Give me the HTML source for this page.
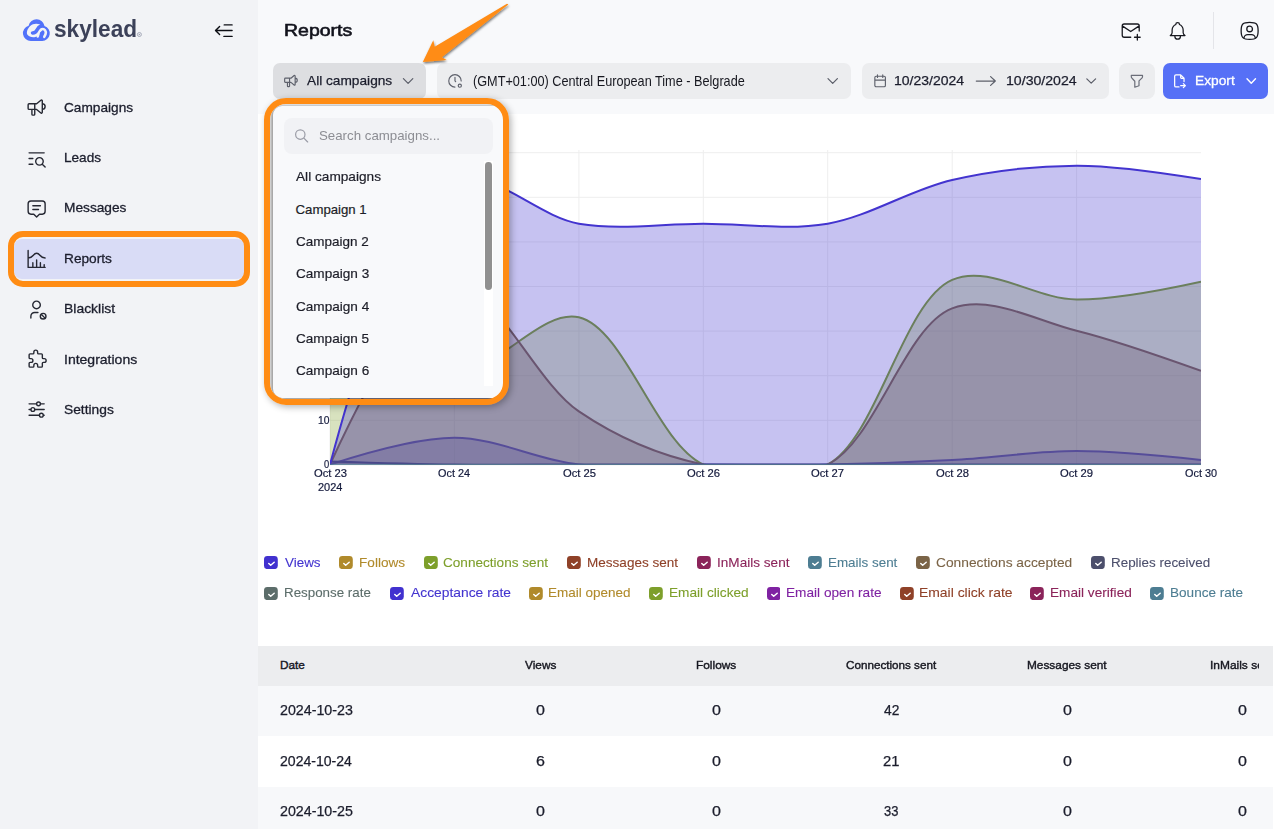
<!DOCTYPE html>
<html><head><meta charset="utf-8"><title>Reports</title>
<style>
*{box-sizing:border-box;margin:0;padding:0}
html,body{width:1274px;height:829px;overflow:hidden;background:#fff;font-family:"Liberation Sans",sans-serif;color:#1b1d2c}
.abs{position:absolute}
.t{position:absolute;white-space:nowrap;line-height:normal;transform-origin:0 0}
#side{position:absolute;left:0;top:0;width:258px;height:829px;background:#f2f3f6}
#main{position:absolute;left:258px;top:0;width:1016px;height:114px;background:#f8f9fb}
.fb{position:absolute;top:62.8px;height:35.8px;border-radius:7px;background:#ecedef}
.row{position:absolute;left:258px;width:1015px}
</style></head><body>
<div id="side"></div>
<div id="main"></div>
<div class="abs" style="left:13.6px;top:238.8px;width:231px;height:40.3px;border-radius:8px;background:#d9dcf6"></div>
<div class="abs" style="left:8px;top:231.1px;width:242px;height:55.9px;border:6px solid #ff8c14;border-radius:15px"></div>
<div class="abs" style="left:1213px;top:12px;width:1px;height:37px;background:#e4e5e9"></div>
<div class="fb" style="left:273.2px;width:152.8px;background:#dddee1"></div>
<div class="fb" style="left:437px;width:414px"></div>
<div class="fb" style="left:862.1px;width:247px"></div>
<div class="fb" style="left:1119px;width:36px;border-radius:8px"></div>
<div class="fb" style="left:1163px;width:105px;background:#5670f6;border-radius:7px"></div>
<!-- table -->
<div class="row" style="top:646.2px;height:39.5px;background:#ecedef"></div>
<div class="row" style="top:685.7px;height:50.4px;background:#f7f8fa"></div>
<div class="row" style="top:787px;height:42px;background:#f7f8fa"></div>
<svg class="abs" style="left:0;top:0" width="1274" height="829" viewBox="0 0 1274 829"><defs><clipPath id="pc"><rect x="330.0" y="150" width="871.0" height="314.8"/></clipPath></defs><line x1="330.0" x2="330.0" y1="150" y2="464.5" stroke="#eeeeee" stroke-width="1"/><line x1="454.4" x2="454.4" y1="150" y2="464.5" stroke="#eeeeee" stroke-width="1"/><line x1="578.9" x2="578.9" y1="150" y2="464.5" stroke="#eeeeee" stroke-width="1"/><line x1="703.3" x2="703.3" y1="150" y2="464.5" stroke="#eeeeee" stroke-width="1"/><line x1="827.7" x2="827.7" y1="150" y2="464.5" stroke="#eeeeee" stroke-width="1"/><line x1="952.2" x2="952.2" y1="150" y2="464.5" stroke="#eeeeee" stroke-width="1"/><line x1="1076.6" x2="1076.6" y1="150" y2="464.5" stroke="#eeeeee" stroke-width="1"/><line x1="330.0" x2="1201.0" y1="464.9" y2="464.9" stroke="#eeeeee" stroke-width="1"/><line x1="330.0" x2="1201.0" y1="420.3" y2="420.3" stroke="#eeeeee" stroke-width="1"/><line x1="330.0" x2="1201.0" y1="375.7" y2="375.7" stroke="#eeeeee" stroke-width="1"/><line x1="330.0" x2="1201.0" y1="331.1" y2="331.1" stroke="#eeeeee" stroke-width="1"/><line x1="330.0" x2="1201.0" y1="286.5" y2="286.5" stroke="#eeeeee" stroke-width="1"/><line x1="330.0" x2="1201.0" y1="241.9" y2="241.9" stroke="#eeeeee" stroke-width="1"/><line x1="330.0" x2="1201.0" y1="197.3" y2="197.3" stroke="#eeeeee" stroke-width="1"/><line x1="330.0" x2="1201.0" y1="152.7" y2="152.7" stroke="#eeeeee" stroke-width="1"/><g clip-path="url(#pc)"><path d="M330.00,464.50Q412.95,437.74 454.43,437.74C495.91,437.74 537.15,460.07 578.86,464.50C620.10,468.88 661.81,464.50 703.29,464.50C744.77,464.50 786.25,465.24 827.72,464.50C869.20,463.76 910.69,462.27 952.15,460.04C993.65,457.81 1035.10,451.12 1076.58,451.12Q1118.06,451.12 1201.01,460.04L1201.01,464.50L330.00,464.50Z" fill="#4334cf" fill-opacity="0.3" stroke="none"/><path d="M330.00,464.50Q412.95,437.74 454.43,437.74C495.91,437.74 537.15,460.07 578.86,464.50C620.10,468.88 661.81,464.50 703.29,464.50C744.77,464.50 786.25,465.24 827.72,464.50C869.20,463.76 910.69,462.27 952.15,460.04C993.65,457.81 1035.10,451.12 1076.58,451.12Q1118.06,451.12 1201.01,460.04" fill="none" stroke="#4334cf" stroke-width="2"/><path d="M330.00,277.18Q411.40,365.67 454.43,370.84C494.56,375.66 540.44,308.27 578.86,317.32C624.69,328.12 656.19,442.64 703.29,464.50C741.14,482.06 790.72,484.18 827.72,464.50C877.21,438.17 902.87,301.31 952.15,279.86C989.21,263.72 1035.08,299.19 1076.58,299.48Q1118.03,299.77 1201.01,281.64L1201.01,464.50L330.00,464.50Z" fill="#7d9f2b" fill-opacity="0.3" stroke="none"/><path d="M330.00,277.18Q411.40,365.67 454.43,370.84C494.56,375.66 540.44,308.27 578.86,317.32C624.69,328.12 656.19,442.64 703.29,464.50C741.14,482.06 790.72,484.18 827.72,464.50C877.21,438.17 902.87,301.31 952.15,279.86C989.21,263.72 1035.08,299.19 1076.58,299.48Q1118.03,299.77 1201.01,281.64" fill="none" stroke="#7d9f2b" stroke-width="2"/><path d="M330.00,464.50Q410.56,289.90 454.43,286.10C493.96,282.68 534.23,381.15 578.86,411.43C617.92,437.92 660.91,455.84 703.29,464.50C743.94,472.81 790.10,482.62 827.72,464.50C875.38,441.54 904.75,326.26 952.15,308.40C989.87,294.19 1035.45,320.43 1076.58,330.70Q1118.41,341.15 1201.01,370.84L1201.01,464.50L330.00,464.50Z" fill="#7b6447" fill-opacity="0.3" stroke="none"/><path d="M330.00,464.50Q410.56,289.90 454.43,286.10C493.96,282.68 534.23,381.15 578.86,411.43C617.92,437.92 660.91,455.84 703.29,464.50C743.94,472.81 790.10,482.62 827.72,464.50C875.38,441.54 904.75,326.26 952.15,308.40C989.87,294.19 1035.45,320.43 1076.58,330.70Q1118.41,341.15 1201.01,370.84" fill="none" stroke="#7b6447" stroke-width="2"/><path d="M330.00,461.38Q412.95,463.98 454.43,464.50C495.90,465.02 537.38,464.50 578.86,464.50C620.34,464.50 661.81,464.50 703.29,464.50C744.77,464.50 786.24,464.50 827.72,464.50C869.20,464.50 910.67,464.50 952.15,464.50C993.63,464.50 1035.10,464.50 1076.58,464.50Q1118.06,464.50 1201.01,464.50L1201.01,464.50L330.00,464.50Z" fill="#4c4f6c" fill-opacity="0.3" stroke="none"/><path d="M330.00,461.38Q412.95,463.98 454.43,464.50C495.90,465.02 537.38,464.50 578.86,464.50C620.34,464.50 661.81,464.50 703.29,464.50C744.77,464.50 786.24,464.50 827.72,464.50C869.20,464.50 910.67,464.50 952.15,464.50C993.63,464.50 1035.10,464.50 1076.58,464.50Q1118.06,464.50 1201.01,464.50" fill="none" stroke="#4c4f6c" stroke-width="2"/><path d="M330.00,464.50Q399.54,205.43 454.43,181.29C490.21,165.56 536.80,216.70 578.86,223.66C619.78,230.44 661.81,223.66 703.29,223.66C744.77,223.66 786.83,230.63 827.72,223.66C869.82,216.48 910.12,189.62 952.15,179.95C993.10,170.54 1035.10,165.83 1076.58,165.68Q1118.05,165.53 1201.01,179.06L1201.01,464.50L330.00,464.50Z" fill="#4334cf" fill-opacity="0.3" stroke="none"/><path d="M330.00,464.50Q399.54,205.43 454.43,181.29C490.21,165.56 536.80,216.70 578.86,223.66C619.78,230.44 661.81,223.66 703.29,223.66C744.77,223.66 786.83,230.63 827.72,223.66C869.82,216.48 910.12,189.62 952.15,179.95C993.10,170.54 1035.10,165.83 1076.58,165.68Q1118.05,165.53 1201.01,179.06" fill="none" stroke="#4334cf" stroke-width="2"/><line x1="330.0" x2="1201.0" y1="464.4" y2="464.4" stroke="#4d7d92" stroke-width="1"/></g></svg>
<svg class="abs" style="left:264.1px;top:555.9px" width="13.8" height="13.1" viewBox="0 0 13.8 13.1"><rect width="13.8" height="13.1" rx="3.4" fill="#4131cf"/><path d="M4.8 7.5L6.7 9.25L10.2 6.3" fill="none" stroke="#fff" stroke-width="1.5" stroke-linecap="round" stroke-linejoin="round"/></svg><svg class="abs" style="left:339.1px;top:555.9px" width="13.8" height="13.1" viewBox="0 0 13.8 13.1"><rect width="13.8" height="13.1" rx="3.4" fill="#b08a2b"/><path d="M4.8 7.5L6.7 9.25L10.2 6.3" fill="none" stroke="#fff" stroke-width="1.5" stroke-linecap="round" stroke-linejoin="round"/></svg><svg class="abs" style="left:423.8px;top:555.9px" width="13.8" height="13.1" viewBox="0 0 13.8 13.1"><rect width="13.8" height="13.1" rx="3.4" fill="#7d9f2b"/><path d="M4.8 7.5L6.7 9.25L10.2 6.3" fill="none" stroke="#fff" stroke-width="1.5" stroke-linecap="round" stroke-linejoin="round"/></svg><svg class="abs" style="left:567.1px;top:555.9px" width="13.8" height="13.1" viewBox="0 0 13.8 13.1"><rect width="13.8" height="13.1" rx="3.4" fill="#8f4128"/><path d="M4.8 7.5L6.7 9.25L10.2 6.3" fill="none" stroke="#fff" stroke-width="1.5" stroke-linecap="round" stroke-linejoin="round"/></svg><svg class="abs" style="left:697.1px;top:555.9px" width="13.8" height="13.1" viewBox="0 0 13.8 13.1"><rect width="13.8" height="13.1" rx="3.4" fill="#8b245a"/><path d="M4.8 7.5L6.7 9.25L10.2 6.3" fill="none" stroke="#fff" stroke-width="1.5" stroke-linecap="round" stroke-linejoin="round"/></svg><svg class="abs" style="left:808.0px;top:555.9px" width="13.8" height="13.1" viewBox="0 0 13.8 13.1"><rect width="13.8" height="13.1" rx="3.4" fill="#4d7d92"/><path d="M4.8 7.5L6.7 9.25L10.2 6.3" fill="none" stroke="#fff" stroke-width="1.5" stroke-linecap="round" stroke-linejoin="round"/></svg><svg class="abs" style="left:916.1px;top:555.9px" width="13.8" height="13.1" viewBox="0 0 13.8 13.1"><rect width="13.8" height="13.1" rx="3.4" fill="#7b6447"/><path d="M4.8 7.5L6.7 9.25L10.2 6.3" fill="none" stroke="#fff" stroke-width="1.5" stroke-linecap="round" stroke-linejoin="round"/></svg><svg class="abs" style="left:1091.0px;top:555.9px" width="13.8" height="13.1" viewBox="0 0 13.8 13.1"><rect width="13.8" height="13.1" rx="3.4" fill="#4c4f6c"/><path d="M4.8 7.5L6.7 9.25L10.2 6.3" fill="none" stroke="#fff" stroke-width="1.5" stroke-linecap="round" stroke-linejoin="round"/></svg><svg class="abs" style="left:264.1px;top:586.9px" width="13.8" height="13.1" viewBox="0 0 13.8 13.1"><rect width="13.8" height="13.1" rx="3.4" fill="#5c6d6a"/><path d="M4.8 7.5L6.7 9.25L10.2 6.3" fill="none" stroke="#fff" stroke-width="1.5" stroke-linecap="round" stroke-linejoin="round"/></svg><svg class="abs" style="left:389.9px;top:586.9px" width="13.8" height="13.1" viewBox="0 0 13.8 13.1"><rect width="13.8" height="13.1" rx="3.4" fill="#4131cf"/><path d="M4.8 7.5L6.7 9.25L10.2 6.3" fill="none" stroke="#fff" stroke-width="1.5" stroke-linecap="round" stroke-linejoin="round"/></svg><svg class="abs" style="left:529.0px;top:586.9px" width="13.8" height="13.1" viewBox="0 0 13.8 13.1"><rect width="13.8" height="13.1" rx="3.4" fill="#b08a2b"/><path d="M4.8 7.5L6.7 9.25L10.2 6.3" fill="none" stroke="#fff" stroke-width="1.5" stroke-linecap="round" stroke-linejoin="round"/></svg><svg class="abs" style="left:649.2px;top:586.9px" width="13.8" height="13.1" viewBox="0 0 13.8 13.1"><rect width="13.8" height="13.1" rx="3.4" fill="#7d9f2b"/><path d="M4.8 7.5L6.7 9.25L10.2 6.3" fill="none" stroke="#fff" stroke-width="1.5" stroke-linecap="round" stroke-linejoin="round"/></svg><svg class="abs" style="left:766.7px;top:586.9px" width="13.8" height="13.1" viewBox="0 0 13.8 13.1"><rect width="13.8" height="13.1" rx="3.4" fill="#7f22a2"/><path d="M4.8 7.5L6.7 9.25L10.2 6.3" fill="none" stroke="#fff" stroke-width="1.5" stroke-linecap="round" stroke-linejoin="round"/></svg><svg class="abs" style="left:899.8px;top:586.9px" width="13.8" height="13.1" viewBox="0 0 13.8 13.1"><rect width="13.8" height="13.1" rx="3.4" fill="#8f4128"/><path d="M4.8 7.5L6.7 9.25L10.2 6.3" fill="none" stroke="#fff" stroke-width="1.5" stroke-linecap="round" stroke-linejoin="round"/></svg><svg class="abs" style="left:1030.0px;top:586.9px" width="13.8" height="13.1" viewBox="0 0 13.8 13.1"><rect width="13.8" height="13.1" rx="3.4" fill="#8b245a"/><path d="M4.8 7.5L6.7 9.25L10.2 6.3" fill="none" stroke="#fff" stroke-width="1.5" stroke-linecap="round" stroke-linejoin="round"/></svg><svg class="abs" style="left:1150.2px;top:586.9px" width="13.8" height="13.1" viewBox="0 0 13.8 13.1"><rect width="13.8" height="13.1" rx="3.4" fill="#4d7d92"/><path d="M4.8 7.5L6.7 9.25L10.2 6.3" fill="none" stroke="#fff" stroke-width="1.5" stroke-linecap="round" stroke-linejoin="round"/></svg>
<!-- dropdown -->
<div class="abs" style="left:264.1px;top:98px;width:245.3px;height:306.9px;border-radius:22px;box-shadow:2px 2px 7px rgba(0,0,0,.3)"></div>
<div class="abs" style="left:269.6px;top:103.6px;width:234.3px;height:295.8px;border-radius:16px;overflow:hidden">
<div class="abs" style="left:3.6px;top:2.5px;width:231px;height:291.5px;background:#f8f9fb;border-radius:9px;box-shadow:-0.8px 0.8px 4px 0.6px rgba(0,0,0,.45)"></div>
</div>
<div class="abs" style="left:264.1px;top:98px;width:245.3px;height:306.9px;border:6.1px solid #ff8c14;border-radius:22px"></div>
<div class="abs" style="left:284px;top:118.2px;width:208.6px;height:35.6px;border-radius:8px;background:#f1f2f5"></div>
<div class="abs" style="left:484.2px;top:161px;width:8.6px;height:225px;background:#fff"></div>
<div class="abs" style="left:485.3px;top:161.5px;width:6.8px;height:128.4px;border-radius:3.4px;background:#909090"></div>
<!-- arrow -->
<svg class="abs" style="left:400px;top:0" width="130" height="80" viewBox="400 0 130 80"><defs><filter id="sh" x="-20%" y="-20%" width="140%" height="150%"><feDropShadow dx="0.6" dy="1.6" stdDeviation="0.9" flood-color="#000" flood-opacity=".55"/></filter></defs><path d="M508.3 4.4L441.9 57.2L446.6 59.9L422.8 62L433.3 40.3L434.7 46.8L507 3.8Z" fill="#ff8c14" filter="url(#sh)"/></svg>
<svg class="abs" style="left:0;top:0" width="1274" height="829" viewBox="0 0 1274 829" fill="none" stroke-linecap="round" stroke-linejoin="round"><g transform="translate(25.30,96.20) scale(0.9440)" stroke="#262833" stroke-width="1.483"><path d="M18 8a3 3 0 0 1 0 6 M10 8v11a1 1 0 0 1 -1 1h-1a1 1 0 0 1 -1 -1v-5 M12 8h0l4.524 -3.77a.9 .9 0 0 1 1.476 .692v12.156a.9 .9 0 0 1 -1.476 .692l-4.524 -3.77h-8a1 1 0 0 1 -1 -1v-4a1 1 0 0 1 1 -1h8"/></g><g transform="translate(25.30,147.20) scale(0.9440)" stroke="#262833" stroke-width="1.483"><path d="M15 15m-4 0a4 4 0 1 0 8 0a4 4 0 1 0 -8 0 M18.5 18.5l2.5 2.5 M4 6h16 M4 12h4 M4 18h4"/></g><g transform="translate(25.30,197.20) scale(0.9440)" stroke="#262833" stroke-width="1.483"><path d="M8 9h8 M8 13h6 M9 18h-3a3 3 0 0 1 -3 -3v-8a3 3 0 0 1 3 -3h12a3 3 0 0 1 3 3v8a3 3 0 0 1 -3 3h-3l-3 3l-3 -3z"/></g><g transform="translate(25.30,247.60) scale(0.9440)" stroke="#262833" stroke-width="1.483"><path d="M3 3v18h18 M20 18v3 M16 16v5 M12 13v8 M8 16v5 M3 11c6 0 5 -5 9 -5s3 5 9 5"/></g><g transform="translate(25.20,298.30) scale(0.9440)" stroke="#262833" stroke-width="1.483"><path d="M8 7a4 4 0 1 0 8 0a4 4 0 0 0 -8 0 M6 21v-2a4 4 0 0 1 4 -4h3.5 M19 19m-3 0a3 3 0 1 0 6 0a3 3 0 1 0 -6 0 M17 17l4 4"/></g><g transform="translate(26.30,347.30) scale(0.9440)" stroke="#262833" stroke-width="1.483"><path d="M4 7h3a1 1 0 0 0 1 -1v-1a2 2 0 0 1 4 0v1a1 1 0 0 0 1 1h3a1 1 0 0 1 1 1v3a1 1 0 0 0 1 1h1a2 2 0 0 1 0 4h-1a1 1 0 0 0 -1 1v3a1 1 0 0 1 -1 1h-3a1 1 0 0 1 -1 -1v-1a2 2 0 0 0 -4 0v1a1 1 0 0 1 -1 1h-3a1 1 0 0 1 -1 -1v-3a1 1 0 0 1 1 -1h1a2 2 0 0 0 0 -4h-1a1 1 0 0 1 -1 -1v-3a1 1 0 0 1 1 -1"/></g><g transform="translate(25.30,398.20) scale(0.9440)" stroke="#262833" stroke-width="1.483"><path d="M14 6m-2 0a2 2 0 1 0 4 0a2 2 0 1 0 -4 0 M4 6l8 0 M16 6l4 0 M8 12m-2 0a2 2 0 1 0 4 0a2 2 0 1 0 -4 0 M4 12l2 0 M10 12l10 0 M17 18m-2 0a2 2 0 1 0 4 0a2 2 0 1 0 -4 0 M4 18l11 0 M19 18l1 0"/></g><path d="M224.2 24.9H232.1M215.6 30.5H232.1M223.9 36.4H232.1M219.6 26.4L215.5 30.5L219.6 34.6" stroke="#0d0e14" stroke-width="1.4"/><g transform="translate(1119.40,19.30) scale(0.9440)" stroke="#17181f" stroke-width="1.377"><path d="M12 19h-7a2 2 0 0 1 -2 -2v-10a2 2 0 0 1 2 -2h14a2 2 0 0 1 2 2v5.5 M16 19h6 M19 16v6 M3 7l9 6l9 -6"/></g><g transform="translate(1166.60,19.90) scale(0.9200)" stroke="#17181f" stroke-width="1.359"><path d="M10 5a2 2 0 1 1 4 0a7 7 0 0 1 4 6v3a4 4 0 0 0 2 3h-16a4 4 0 0 0 2 -3v-3a7 7 0 0 1 4 -6 M9 17v1a3 3 0 0 0 6 0v-1"/></g><g transform="translate(1238.30,19.50) scale(0.9440)" stroke="#17181f" stroke-width="1.377"><path d="M12 13a3 3 0 1 0 0 -6a3 3 0 0 0 0 6z M12 3c7.2 0 9 1.8 9 9s-1.8 9 -9 9s-9 -1.8 -9 -9s1.8 -9 9 -9z M6 20.05v-.05a4 4 0 0 1 4 -4h4a4 4 0 0 1 4 4v.05"/></g><g transform="translate(282.55,72.60) scale(0.7000)" stroke="#5d606b" stroke-width="1.643"><path d="M18 8a3 3 0 0 1 0 6 M10 8v11a1 1 0 0 1 -1 1h-1a1 1 0 0 1 -1 -1v-5 M12 8h0l4.524 -3.77a.9 .9 0 0 1 1.476 .692v12.156a.9 .9 0 0 1 -1.476 .692l-4.524 -3.77h-8a1 1 0 0 1 -1 -1v-4a1 1 0 0 1 1 -1h8"/></g><path d="M403.40 78.60L408.10 83.30L412.80 78.60" stroke="#5a5d68" stroke-width="1.2"/><g transform="translate(446.70,72.60) scale(0.6900)" stroke="#5d606b" stroke-width="1.667"><path d="M21 12a9 9 0 1 0 -9.002 9 M19 19m-2.3 0a2.3 2.3 0 1 0 4.6 0a2.3 2.3 0 1 0 -4.6 0 M12 7v5l1 1"/></g><path d="M828.00 78.60L832.70 83.30L837.40 78.60" stroke="#5a5d68" stroke-width="1.2"/><g transform="translate(872.20,72.90) scale(0.6600)" stroke="#5d606b" stroke-width="1.742"><path d="M4 7a2 2 0 0 1 2 -2h12a2 2 0 0 1 2 2v12a2 2 0 0 1 -2 2h-12a2 2 0 0 1 -2 -2v-12z M16 3v4 M8 3v4 M4 11h16"/></g><path d="M976.3 81H995.3M990.6 76.6L995.3 81L990.6 85.4" stroke="#5d606b" stroke-width="1.25"/><path d="M1086.80 78.80L1091.20 83.20L1095.60 78.80" stroke="#5a5d68" stroke-width="1.2"/><g transform="translate(1128.50,72.50) scale(0.7000)" stroke="#6b6e79" stroke-width="1.714"><path d="M4 4h16v2.172a2 2 0 0 1 -.586 1.414l-4.414 4.414v7l-6 2v-8.5l-4.405 -4.846a2 2 0 0 1 -.595 -1.426v-2.228z"/></g><g transform="translate(1171.30,72.90) scale(0.6700)" stroke="#ffffff" stroke-width="1.866"><path d="M14 3v4a1 1 0 0 0 1 1h4 M11.5 21h-4.500a2 2 0 0 1 -2 -2v-14a2 2 0 0 1 2 -2h7l5 5v5m-5 6h7m-3 -3l3 3l-3 3"/></g><path d="M1247.00 78.70L1251.25 83.30L1255.50 78.70" stroke="#ffffff" stroke-width="1.4"/></svg><svg class="abs" style="left:0;top:0" width="160" height="60" viewBox="0 0 160 60"><path d="M30.8 41H42.2A7.7 7.7 0 0 0 44.5 26A8.1 8.1 0 0 0 28.6 25.7A7.8 7.8 0 0 0 30.8 41Z" fill="#5272fa"/><path d="M40.2 24.5C37 23.2 32.8 23.4 30.2 25.9C27.5 28.5 26 32.3 27.5 34.8C28.9 37 32.5 37.6 35.3 37C37.8 36.4 38.5 34 39.3 31.6C40.1 29.4 41.2 27.8 41.3 26.4Z" fill="#f2f3f6"/><path d="M37.7 36.4C38.6 33.5 38.9 30.4 41.7 29.2C44.5 28.3 46.5 31.2 45.6 33.9C45.3 35 44.8 35.9 44.2 36.8" fill="none" stroke="#f2f3f6" stroke-width="2.6" stroke-linecap="round"/><path d="M41.8 25.4C39.6 26.3 38 28 37 30C36.1 31.9 35 33 32.5 32.9" fill="none" stroke="#5272fa" stroke-width="3.5" stroke-linecap="round"/><path d="M41.5 39.2V33.3" stroke="#5272fa" stroke-width="3.1" stroke-linecap="round"/><circle cx="139.4" cy="34.5" r="2" fill="none" stroke="#9ea3b3" stroke-width="0.9"/><circle cx="139.4" cy="34.5" r="0.8" fill="#9ea3b3"/></svg>
<svg class="abs" style="left:0;top:0" width="1274" height="829" viewBox="0 0 1274 829" fill="none" stroke-linecap="round" stroke-linejoin="round"><g transform="translate(293.60,127.90) scale(0.6700)" stroke="#9a9ca6" stroke-width="1.791"><path d="M10 10m-7 0a7 7 0 1 0 14 0a7 7 0 1 0 -14 0 M21 21l-6 -6"/></g></svg>
<span class="t" style="left:54.33px;top:15.00px;font-size:24.5px;color:#3c4159;font-weight:bold;transform:scaleX(0.9241)">skylead</span>
<span class="t" style="left:63.54px;top:100.00px;font-size:13.5px;color:#1b1d2c;-webkit-text-stroke:0.3px #1b1d2c;transform:scaleX(1.0119)">Campaigns</span>
<span class="t" style="left:63.54px;top:150.00px;font-size:13.5px;color:#1b1d2c;-webkit-text-stroke:0.3px #1b1d2c;transform:scaleX(1.0056)">Leads</span>
<span class="t" style="left:63.53px;top:200.00px;font-size:13.5px;color:#1b1d2c;-webkit-text-stroke:0.3px #1b1d2c;transform:scaleX(1.0150)">Messages</span>
<span class="t" style="left:63.54px;top:251.00px;font-size:13.5px;color:#1b1d2c;-webkit-text-stroke:0.3px #1b1d2c;transform:scaleX(1.0130)">Reports</span>
<span class="t" style="left:63.52px;top:301.00px;font-size:13.5px;color:#1b1d2c;-webkit-text-stroke:0.3px #1b1d2c;transform:scaleX(1.0327)">Blacklist</span>
<span class="t" style="left:63.91px;top:352.00px;font-size:13.5px;color:#1b1d2c;-webkit-text-stroke:0.3px #1b1d2c;transform:scaleX(1.0377)">Integrations</span>
<span class="t" style="left:63.53px;top:402.00px;font-size:13.5px;color:#1b1d2c;-webkit-text-stroke:0.3px #1b1d2c;transform:scaleX(1.0208)">Settings</span>
<span class="t" style="left:283.58px;top:21.00px;font-size:16.7px;color:#12131c;-webkit-text-stroke:0.6px #12131c;transform:scaleX(1.1667)">Reports</span>
<span class="t" style="left:307.25px;top:73.00px;font-size:13.2px;color:#1b1d2c;-webkit-text-stroke:0.25px #1b1d2c;transform:scaleX(1.0378)">All campaigns</span>
<span class="t" style="left:472.68px;top:73.00px;font-size:14.6px;color:#16171f;transform:scaleX(0.8691)">(GMT+01:00) Central European Time - Belgrade</span>
<span class="t" style="left:894.40px;top:73.00px;font-size:13.4px;color:#1b1d2c;-webkit-text-stroke:0.25px #1b1d2c;transform:scaleX(1.0455)">10/23/2024</span>
<span class="t" style="left:1005.60px;top:73.00px;font-size:13.4px;color:#1b1d2c;-webkit-text-stroke:0.25px #1b1d2c;transform:scaleX(1.0545)">10/30/2024</span>
<span class="t" style="left:1195.22px;top:73.00px;font-size:13.4px;color:#ffffff;-webkit-text-stroke:0.3px #ffffff;transform:scaleX(1.0263)">Export</span>
<span class="t" style="left:318.64px;top:128.00px;font-size:13.2px;color:#8c8d93;transform:scaleX(1.0068)">Search campaigns...</span>
<span class="t" style="left:295.95px;top:169.00px;font-size:13.2px;color:#1d1e28;-webkit-text-stroke:0.2px #1d1e28;transform:scaleX(1.0354)">All campaigns</span>
<span class="t" style="left:295.55px;top:202.00px;font-size:13.2px;color:#1d1e28;-webkit-text-stroke:0.2px #1d1e28;transform:scaleX(1.0000)">Campaign 1</span>
<span class="t" style="left:295.53px;top:234.00px;font-size:13.2px;color:#1d1e28;-webkit-text-stroke:0.2px #1d1e28;transform:scaleX(1.0214)">Campaign 2</span>
<span class="t" style="left:295.52px;top:266.00px;font-size:13.2px;color:#1d1e28;-webkit-text-stroke:0.2px #1d1e28;transform:scaleX(1.0300)">Campaign 3</span>
<span class="t" style="left:295.52px;top:299.00px;font-size:13.2px;color:#1d1e28;-webkit-text-stroke:0.2px #1d1e28;transform:scaleX(1.0300)">Campaign 4</span>
<span class="t" style="left:295.52px;top:331.00px;font-size:13.2px;color:#1d1e28;-webkit-text-stroke:0.2px #1d1e28;transform:scaleX(1.0271)">Campaign 5</span>
<span class="t" style="left:295.52px;top:363.00px;font-size:13.2px;color:#1d1e28;-webkit-text-stroke:0.2px #1d1e28;transform:scaleX(1.0300)">Campaign 6</span>
<span class="t" style="left:313.75px;top:467.00px;font-size:10.8px;color:#141a3c;-webkit-text-stroke:0.2px #141a3c;transform:scaleX(1.0387)">Oct 23</span>
<span class="t" style="left:438.18px;top:467.00px;font-size:10.8px;color:#141a3c;-webkit-text-stroke:0.2px #141a3c;transform:scaleX(1.0062)">Oct 24</span>
<span class="t" style="left:562.61px;top:467.00px;font-size:10.8px;color:#141a3c;-webkit-text-stroke:0.2px #141a3c;transform:scaleX(1.0387)">Oct 25</span>
<span class="t" style="left:687.04px;top:467.00px;font-size:10.8px;color:#141a3c;-webkit-text-stroke:0.2px #141a3c;transform:scaleX(1.0387)">Oct 26</span>
<span class="t" style="left:811.47px;top:467.00px;font-size:10.8px;color:#141a3c;-webkit-text-stroke:0.2px #141a3c;transform:scaleX(1.0387)">Oct 27</span>
<span class="t" style="left:935.90px;top:467.00px;font-size:10.8px;color:#141a3c;-webkit-text-stroke:0.2px #141a3c;transform:scaleX(1.0387)">Oct 28</span>
<span class="t" style="left:1060.33px;top:467.00px;font-size:10.8px;color:#141a3c;-webkit-text-stroke:0.2px #141a3c;transform:scaleX(1.0387)">Oct 29</span>
<span class="t" style="left:1184.76px;top:467.00px;font-size:10.8px;color:#141a3c;-webkit-text-stroke:0.2px #141a3c;transform:scaleX(1.0063)">Oct 30</span>
<span class="t" style="left:317.85px;top:481.00px;font-size:10.8px;color:#141a3c;-webkit-text-stroke:0.2px #141a3c;transform:scaleX(1.0167)">2024</span>
<span class="t" style="left:317.70px;top:414.00px;font-size:10.8px;color:#141a3c;-webkit-text-stroke:0.2px #141a3c;transform:scaleX(0.9545)">10</span>
<span class="t" style="left:324.05px;top:458.00px;font-size:10.8px;color:#141a3c;-webkit-text-stroke:0.2px #141a3c;transform:scaleX(0.8667)">0</span>
<span class="t" style="left:285.35px;top:555.00px;font-size:13.4px;color:#4334cf;-webkit-text-stroke:0.1px #4334cf;transform:scaleX(1.0029)">Views</span>
<span class="t" style="left:358.83px;top:555.00px;font-size:13.4px;color:#b08a2b;-webkit-text-stroke:0.1px #b08a2b;transform:scaleX(1.0159)">Follows</span>
<span class="t" style="left:442.94px;top:555.00px;font-size:13.4px;color:#7d9f2b;-webkit-text-stroke:0.1px #7d9f2b;transform:scaleX(1.0146)">Connections sent</span>
<span class="t" style="left:587.24px;top:555.00px;font-size:13.4px;color:#8f4128;-webkit-text-stroke:0.1px #8f4128;transform:scaleX(1.0112)">Messages sent</span>
<span class="t" style="left:716.84px;top:555.00px;font-size:13.4px;color:#8b245a;-webkit-text-stroke:0.1px #8b245a;transform:scaleX(1.0141)">InMails sent</span>
<span class="t" style="left:828.25px;top:555.00px;font-size:13.4px;color:#4d7d92;-webkit-text-stroke:0.1px #4d7d92;transform:scaleX(1.0015)">Emails sent</span>
<span class="t" style="left:935.72px;top:555.00px;font-size:13.4px;color:#7b6447;-webkit-text-stroke:0.1px #7b6447;transform:scaleX(1.0282)">Connections accepted</span>
<span class="t" style="left:1110.65px;top:555.00px;font-size:13.4px;color:#4c4f6c;-webkit-text-stroke:0.1px #4c4f6c;transform:scaleX(1.0021)">Replies received</span>
<span class="t" style="left:284.35px;top:585.00px;font-size:13.4px;color:#5c6d6a;-webkit-text-stroke:0.1px #5c6d6a;transform:scaleX(0.9977)">Response rate</span>
<span class="t" style="left:410.65px;top:585.00px;font-size:13.4px;color:#4334cf;-webkit-text-stroke:0.1px #4334cf;transform:scaleX(1.0333)">Acceptance rate</span>
<span class="t" style="left:548.04px;top:585.00px;font-size:13.4px;color:#b08a2b;-webkit-text-stroke:0.1px #b08a2b;transform:scaleX(1.0075)">Email opened</span>
<span class="t" style="left:668.83px;top:585.00px;font-size:13.4px;color:#7d9f2b;-webkit-text-stroke:0.1px #7d9f2b;transform:scaleX(1.0197)">Email clicked</span>
<span class="t" style="left:786.33px;top:585.00px;font-size:13.4px;color:#7f22a2;-webkit-text-stroke:0.1px #7f22a2;transform:scaleX(1.0185)">Email open rate</span>
<span class="t" style="left:918.81px;top:585.00px;font-size:13.4px;color:#8f4128;-webkit-text-stroke:0.1px #8f4128;transform:scaleX(1.0386)">Email click rate</span>
<span class="t" style="left:1049.63px;top:585.00px;font-size:13.4px;color:#8b245a;-webkit-text-stroke:0.1px #8b245a;transform:scaleX(1.0177)">Email verified</span>
<span class="t" style="left:1170.04px;top:585.00px;font-size:13.4px;color:#4d7d92;-webkit-text-stroke:0.1px #4d7d92;transform:scaleX(1.0127)">Bounce rate</span>
<span class="t" style="left:279.95px;top:658.00px;font-size:11.8px;color:#15161f;-webkit-text-stroke:0.4px #15161f;transform:scaleX(1.0000)">Date</span>
<span class="t" style="left:525.35px;top:658.00px;font-size:11.8px;color:#15161f;-webkit-text-stroke:0.4px #15161f;transform:scaleX(1.0032)">Views</span>
<span class="t" style="left:695.54px;top:658.00px;font-size:11.8px;color:#15161f;-webkit-text-stroke:0.4px #15161f;transform:scaleX(1.0077)">Follows</span>
<span class="t" style="left:846.25px;top:658.00px;font-size:11.8px;color:#15161f;-webkit-text-stroke:0.4px #15161f;transform:scaleX(0.9891)">Connections sent</span>
<span class="t" style="left:1026.65px;top:658.00px;font-size:11.8px;color:#15161f;-webkit-text-stroke:0.4px #15161f;transform:scaleX(1.0038)">Messages sent</span>
<div style="position:absolute;left:0;top:640px;width:1259.3px;height:60px;overflow:hidden"><span class="t" style="left:1210.44px;top:18.00px;font-size:11.8px;color:#15161f;-webkit-text-stroke:0.4px #15161f;transform:scaleX(1.0129)">InMails sent</span></div>
<span class="t" style="left:279.85px;top:702.00px;font-size:14.2px;color:#1b1d2c;-webkit-text-stroke:0.25px #1b1d2c;transform:scaleX(1.0042)">2024-10-23</span>
<span class="t" style="left:536.14px;top:702.00px;font-size:14.2px;color:#1b1d2c;-webkit-text-stroke:0.25px #1b1d2c;transform:scaleX(1.1300)">0</span>
<span class="t" style="left:711.54px;top:702.00px;font-size:14.2px;color:#1b1d2c;-webkit-text-stroke:0.25px #1b1d2c;transform:scaleX(1.1300)">0</span>
<span class="t" style="left:884.45px;top:702.00px;font-size:14.2px;color:#1b1d2c;-webkit-text-stroke:0.25px #1b1d2c;transform:scaleX(0.9733)">42</span>
<span class="t" style="left:1062.54px;top:702.00px;font-size:14.2px;color:#1b1d2c;-webkit-text-stroke:0.25px #1b1d2c;transform:scaleX(1.1300)">0</span>
<span class="t" style="left:1238.04px;top:702.00px;font-size:14.2px;color:#1b1d2c;-webkit-text-stroke:0.25px #1b1d2c;transform:scaleX(1.1300)">0</span>
<span class="t" style="left:279.86px;top:753.00px;font-size:14.2px;color:#1b1d2c;-webkit-text-stroke:0.25px #1b1d2c;transform:scaleX(0.9903)">2024-10-24</span>
<span class="t" style="left:536.14px;top:753.00px;font-size:14.2px;color:#1b1d2c;-webkit-text-stroke:0.25px #1b1d2c;transform:scaleX(1.1300)">6</span>
<span class="t" style="left:711.54px;top:753.00px;font-size:14.2px;color:#1b1d2c;-webkit-text-stroke:0.25px #1b1d2c;transform:scaleX(1.1300)">0</span>
<span class="t" style="left:883.41px;top:753.00px;font-size:14.2px;color:#1b1d2c;-webkit-text-stroke:0.25px #1b1d2c;transform:scaleX(1.0429)">21</span>
<span class="t" style="left:1062.54px;top:753.00px;font-size:14.2px;color:#1b1d2c;-webkit-text-stroke:0.25px #1b1d2c;transform:scaleX(1.1300)">0</span>
<span class="t" style="left:1238.04px;top:753.00px;font-size:14.2px;color:#1b1d2c;-webkit-text-stroke:0.25px #1b1d2c;transform:scaleX(1.1300)">0</span>
<span class="t" style="left:279.85px;top:803.00px;font-size:14.2px;color:#1b1d2c;-webkit-text-stroke:0.25px #1b1d2c;transform:scaleX(1.0042)">2024-10-25</span>
<span class="t" style="left:536.14px;top:803.00px;font-size:14.2px;color:#1b1d2c;-webkit-text-stroke:0.25px #1b1d2c;transform:scaleX(1.1300)">0</span>
<span class="t" style="left:711.54px;top:803.00px;font-size:14.2px;color:#1b1d2c;-webkit-text-stroke:0.25px #1b1d2c;transform:scaleX(1.1300)">0</span>
<span class="t" style="left:884.45px;top:803.00px;font-size:14.2px;color:#1b1d2c;-webkit-text-stroke:0.25px #1b1d2c;transform:scaleX(0.9125)">33</span>
<span class="t" style="left:1062.54px;top:803.00px;font-size:14.2px;color:#1b1d2c;-webkit-text-stroke:0.25px #1b1d2c;transform:scaleX(1.1300)">0</span>
<span class="t" style="left:1238.04px;top:803.00px;font-size:14.2px;color:#1b1d2c;-webkit-text-stroke:0.25px #1b1d2c;transform:scaleX(1.1300)">0</span>
</body></html>
